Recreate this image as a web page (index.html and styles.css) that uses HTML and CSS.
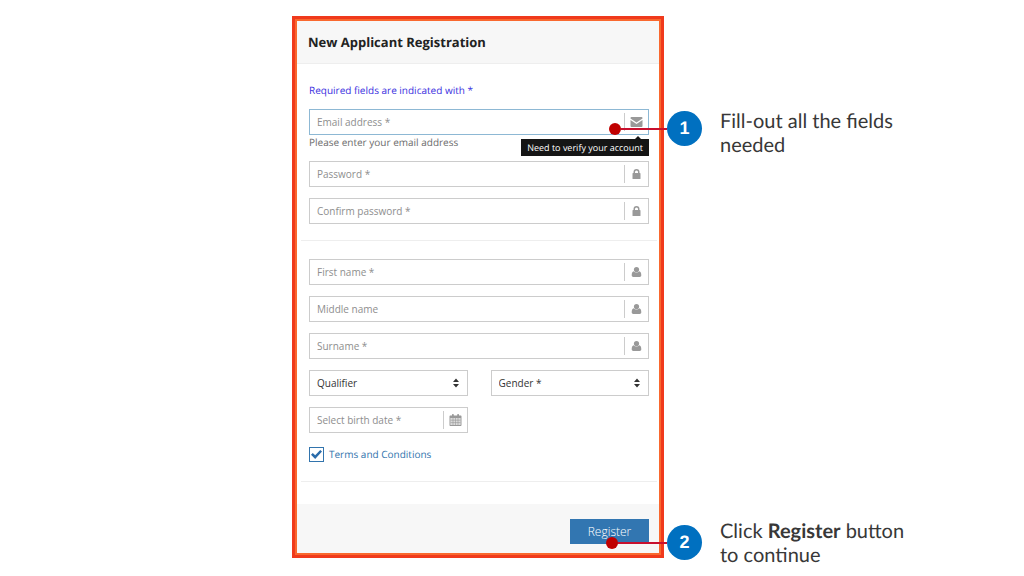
FILE: index.html
```html
<!DOCTYPE html>
<html lang="en">

<head>
    <meta charset="UTF-8">
    <meta name="viewport" content="width=device-width, initial-scale=1.0">
    <title>New Applicant Registration</title>
    <link rel="stylesheet" href="styles.css">
</head>

<body>
    <!-- Shared icons -->
    <svg class="icon-defs" aria-hidden="true">
        <symbol id="icon-envelope" viewBox="-0.5 -1 13 12">
            <path d="M1 0h10a1 1 0 0 1 1 1v.6L6 5.6 0 1.6V1a1 1 0 0 1 1-1z" />
            <path d="M0 3l6 4 6-4v6a1 1 0 0 1-1 1H1a1 1 0 0 1-1-1z" />
        </symbol>
        <symbol id="icon-lock" viewBox="0 0 12 12">
            <path fill-rule="evenodd" d="M3 5V4a3 3 0 0 1 6 0v1h.4a.6.6 0 0 1 .6.6v4.8a.6.6 0 0 1-.6.6H2.600a.6.6 0 0 1-.6-.6V5.600A.6.6 0 0 1 2.600 5zM4.500 5h3V4a1.500 1.500 0 0 0-3 0z" />
        </symbol>
        <symbol id="icon-user" viewBox="0 0 12 12">
            <circle cx="6" cy="3.600" r="2.600" />
            <path d="M3.300 5.300C1.800 5.600 1.200 7 1.200 9.300c0 1 .7 1.700 1.600 1.700h6.400c.9 0 1.600-.7 1.600-1.700 0-2.300-.6-3.700-2.100-4-.7.8-1.600 1.200-2.700 1.200s-2-.4-2.700-1.200z" />
        </symbol>
        <symbol id="icon-calendar" viewBox="0 0 12 12">
            <path fill-rule="evenodd" d="M1 1.500h1.500V.7c0-.4.3-.7.7-.7h.4c.4 0 .7.3.7.7v.8h3.400V.7c0-.4.3-.7.7-.7h.4c.4 0 .7.300.7.700v.8H11c.6 0 1 .4 1 1V11c0 .6-.4 1-1 1H1c-.6 0-1-.4-1-1V2.500c0-.6.4-1 1-1zM1 4v7h10V4z" />
            <path d="M1 6.200h10M1 8.600h10M3.500 4v7M6 4v7M8.500 4v7" stroke="currentColor" stroke-width=".6" />
            <path d="M1 4h10v7H1z" opacity=".35" />
        </symbol>
        <symbol id="icon-sort" viewBox="0 0 8 10">
            <path d="M4 0.500l3 3.500H1zM4 9.500l3-3.500H1z" />
        </symbol>
    </svg>

    <main class="guide">
        <form class="card">
            <h1 class="card-header">New Applicant Registration</h1>

            <div class="card-body">
                <p class="required-note">Required fields are indicated with *</p>

                <!-- Account -->
                <div class="fields">
                    <div class="field-group">
                        <div class="field active">
                            <input type="email" id="email" placeholder="Email address *" aria-label="Email address">
                            <svg class="icon"><use href="#icon-envelope" /></svg>
                            <span class="tooltip" role="tooltip">Need to verify your account</span>
                            <div class="callout callout-email">
                                <span class="dot"></span>
                                <span class="line"></span>
                                <span class="step">1</span>
                            </div>
                        </div>
                        <label class="help" for="email">Please enter your email address</label>
                    </div>
                    <div class="field">
                        <input type="password" placeholder="Password *" aria-label="Password">
                        <svg class="icon"><use href="#icon-lock" /></svg>
                    </div>
                    <div class="field">
                        <input type="password" placeholder="Confirm password *" aria-label="Confirm password">
                        <svg class="icon"><use href="#icon-lock" /></svg>
                    </div>
                </div>

                <hr>

                <!-- Personal details -->
                <div class="fields">
                    <div class="field">
                        <input type="text" placeholder="First name *" aria-label="First name">
                        <svg class="icon"><use href="#icon-user" /></svg>
                    </div>
                    <div class="field">
                        <input type="text" placeholder="Middle name" aria-label="Middle name">
                        <svg class="icon"><use href="#icon-user" /></svg>
                    </div>
                    <div class="field">
                        <input type="text" placeholder="Surname *" aria-label="Surname">
                        <svg class="icon"><use href="#icon-user" /></svg>
                    </div>
                    <div class="field-row">
                        <div class="select">
                            <select aria-label="Qualifier">
                                <option>Qualifier</option>
                            </select>
                            <svg class="sort"><use href="#icon-sort" /></svg>
                        </div>
                        <div class="select">
                            <select aria-label="Gender">
                                <option>Gender *</option>
                            </select>
                            <svg class="sort"><use href="#icon-sort" /></svg>
                        </div>
                    </div>
                    <div class="field-row">
                        <div class="field">
                            <input type="text" placeholder="Select birth date *" aria-label="Birth date">
                            <svg class="icon"><use href="#icon-calendar" /></svg>
                        </div>
                    </div>
                </div>

                <div class="terms">
                    <input type="checkbox" id="terms" checked>
                    <label for="terms">Terms and Conditions</label>
                </div>

                <hr>
            </div>

            <div class="card-footer">
                <button type="button" class="register">Register</button>
                <div class="callout callout-register">
                    <span class="dot"></span>
                    <span class="line"></span>
                    <span class="step">2</span>
                </div>
            </div>
        </form>

        <!-- Step descriptions -->
        <aside class="notes">
            <p>Fill-out all the fields needed</p>
            <p>Click <b>Register</b> button to continue</p>
        </aside>
    </main>
</body>

</html>
```

FILE: styles.css
```css
* {
    box-sizing: border-box;
}

body {
    min-height: 100vh;
    margin: 0;
    background: #fff;
    color: #383838;
    font-family: "Open Sans", "Noto Sans", sans-serif;
    font-size: 10px;
    line-height: 15px;
    text-rendering: geometricPrecision;
}

.icon-defs {
    position: absolute;
    width: 0;
    height: 0;
}

.guide {
    display: grid;
    grid-template-columns: 292fr 372px 360fr;
    padding: 16px 0 18px;
}

/* Registration card */
.card {
    grid-column: 2;
    padding: 2px;
    border: 3px solid #f03a1c;
    box-shadow: inset 0 0 0 2px #f9682e;
}

.card-header {
    margin: 0;
    padding: 12px 11px;
    border-bottom: 1px solid #eee;
    background: #f7f7f7;
    color: #222;
    font-size: 13px;
    font-weight: 700;
    line-height: 18px;
}

.card-body {
    padding: 19px 10px 4px 12px;
}

.required-note {
    margin: 0 0 11px;
    color: #3a2fe0;
}

.fields {
    display: grid;
    gap: 11px;
}

.field,
.select {
    position: relative;
    display: flex;
    align-items: center;
    height: 26px;
    border: 1px solid #ccc;
    background: #fff;
}

.field.active {
    border-color: #8db8d4;
}

.field input {
    flex: 1;
    min-width: 0;
    padding: 0 7px;
    border: 0;
    outline: 0;
    background: none;
    font: inherit;
}

.field input::placeholder {
    color: #8e8e8e;
    opacity: 1;
}

.icon {
    width: 24px;
    height: 18px;
    padding: 3px 0;
    border-left: 1px solid #ccc;
    color: #999;
    fill: currentColor;
}

.help {
    display: block;
    color: #6c6c6c;
}

.field-row {
    display: grid;
    grid-template-columns: repeat(2, minmax(0, 1fr));
    gap: 23px;
}

.select select {
    width: 100%;
    height: 100%;
    padding: 0 7px;
    border: 0;
    appearance: none;
    background: none;
    color: #333;
    font: inherit;
}

.sort {
    position: absolute;
    right: 7px;
    width: 8px;
    height: 10px;
    fill: #333;
    pointer-events: none;
}

hr {
    margin: 16px -8px 18px;
    border: 0;
    border-top: 1px solid #eee;
}

.tooltip {
    position: absolute;
    top: 29px;
    right: -1px;
    z-index: 1;
    padding: 1px 6px;
    background: #151515;
    color: #fff;
    font-size: 9px;
    white-space: nowrap;
}

.tooltip::before {
    content: "";
    position: absolute;
    top: -3px;
    right: 8px;
    border: 3px solid transparent;
    border-top: 0;
    border-bottom-color: #151515;
}

/* Terms checkbox */
.terms {
    display: flex;
    align-items: center;
    gap: 5px;
    padding: 14px 0 3px;
    color: #3274ad;
}

.terms input {
    display: grid;
    place-items: center;
    width: 15px;
    height: 15px;
    margin: 0;
    border: 1px solid #3274ad;
    appearance: none;
}

.terms input:checked::before {
    content: "";
    width: 11px;
    height: 9px;
    background: #2b6cab;
    clip-path: polygon(0 53%, 16% 34%, 38% 57%, 84% 0, 100% 18%, 38% 100%);
}

.card-footer {
    position: relative;
    display: flex;
    justify-content: flex-end;
    padding: 15px 10px 9px;
    background: #f7f7f7;
}

.register {
    width: 79px;
    height: 25px;
    padding: 0;
    border: 0;
    background: #3276b1;
    color: #fff;
    font: 300 12px "Open Sans", sans-serif;
}

/* Numbered callouts over the card */
.callout {
    position: absolute;
    z-index: 2;
    display: flex;
    align-items: center;
}

.callout-email {
    top: 1px;
    right: -54px;
}

.callout-register {
    top: 21px;
    right: -43px;
}

.dot {
    width: 12px;
    height: 12px;
    border-radius: 50%;
    background: #c00000;
}

.line {
    width: 46px;
    height: 2px;
    background: #c8102e;
}

.callout-register .line {
    width: 49px;
}

.step {
    width: 35px;
    height: 35px;
    border-radius: 50%;
    background: #0070c0;
    color: #fff;
    font: bold 18px/35px "Liberation Sans", sans-serif;
    text-align: center;
}

/* The last note ends a little below the card */
.notes {
    display: flex;
    flex-direction: column;
    justify-content: space-between;
    max-width: 256px;
    margin-bottom: -9px;
    padding: 93px 0 0 56px;
    font-family: Lato, sans-serif;
    font-size: 20px;
    line-height: 24px;
}

.notes p {
    margin: 0;
}
```
